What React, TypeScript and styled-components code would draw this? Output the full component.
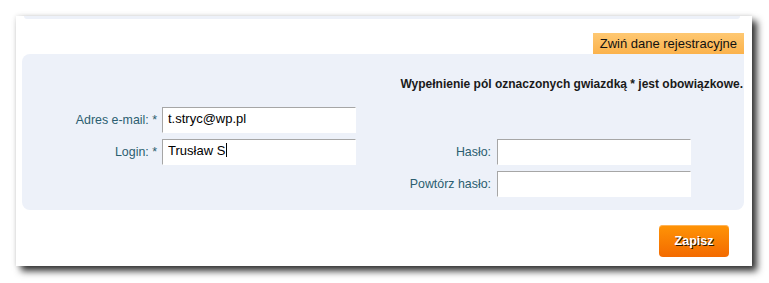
import React from "react";
import styled, { createGlobalStyle } from "styled-components";

const Global = createGlobalStyle`
  html, body { margin: 0; padding: 0; background: #ffffff; }
  body { font-family: "Liberation Sans", Arial, sans-serif; }
  * { box-sizing: border-box; }
`;

const Page = styled.div`
  padding: 16px 17px 17px 16px;
  min-height: 283px;
`;

const Card = styled.div`
  width: 736px;
  height: 250px;
  background: #ffffff;
  box-shadow: 5px 5px 7px rgba(0, 0, 0, 0.8), 0 0 5px rgba(0, 0, 0, 0.12);
  padding: 0 8px 0 6px;
  display: flex;
  flex-direction: column;
`;

const TopStrip = styled.div`
  height: 3px;
  margin: 0 4px 0 2px;
  background: #edf1f9;
  border-radius: 0 0 3px 3px;
`;

const TabRow = styled.div`
  display: flex;
  justify-content: flex-end;
  margin-top: 14px;
`;

const Tab = styled.button`
  height: 21px;
  padding: 0 7px;
  border: none;
  background: linear-gradient(#fec872, #fbb24c);
  font-family: "Liberation Sans", Arial, sans-serif;
  font-size: 13px;
  color: #111;
  cursor: pointer;
`;

const Panel = styled.div`
  height: 156px;
  background: #edf1f9;
  border-radius: 8px 0 8px 8px;
  padding: 23px 1px 13px 0;
`;

const Notice = styled.div`
  text-align: right;
  font-weight: bold;
  font-size: 12px;
  line-height: 14px;
  color: #1a1a1a;
  margin-bottom: 16px;
`;

const FormGrid = styled.div`
  display: grid;
  grid-template-columns: 140px 194px 141px 194px;
  grid-auto-rows: 26px;
  row-gap: 6px;
`;

const Label = styled.label<{ $col: number; $row: number }>`
  grid-column: ${(p) => p.$col};
  grid-row: ${(p) => p.$row};
  display: flex;
  align-items: center;
  justify-content: flex-end;
  padding-right: ${(p) => (p.$col === 1 ? 5 : 6)}px;
  font-size: 12.4px;
  color: #2b5e70;
  white-space: nowrap;
`;

const FieldWrap = styled.div<{ $col: number; $row: number }>`
  grid-column: ${(p) => p.$col};
  grid-row: ${(p) => p.$row};
  position: relative;
`;

const Input = styled.input`
  width: 100%;
  height: 26px;
  margin: 0;
  padding: 0 0 3px 5px;
  border-style: solid;
  border-width: 1px;
  border-color: #a6a6a6 #ffffff #ffffff #a6a6a6;
  background: #ffffff;
  font-family: "Liberation Sans", Arial, sans-serif;
  font-size: 13px;
  color: #000;
  outline: none;
`;

const Caret = styled.span`
  position: absolute;
  top: 4px;
  width: 1px;
  height: 14px;
  background: #000;
`;

const Footer = styled.div`
  display: flex;
  justify-content: flex-end;
  padding: 15px 15px 0 0;
`;

const SaveButton = styled.button`
  width: 70px;
  height: 32px;
  border: none;
  border-radius: 4px;
  background: linear-gradient(#ff9406, #f36a00);
  box-shadow: inset 0 1px 0 rgba(255, 200, 140, 0.6);
  color: #ffffff;
  font-family: "Liberation Sans", Arial, sans-serif;
  font-weight: bold;
  font-size: 12.5px;
  text-shadow: 1px 1px 0 #2a1500;
  cursor: pointer;
`;

export default function App() {
  return (
    <>
      <Global />
      <Page>
        <Card>
          <TopStrip />
          <TabRow>
            <Tab>Zwiń dane rejestracyjne</Tab>
          </TabRow>
          <Panel>
            <Notice>Wypełnienie pól oznaczonych gwiazdką * jest obowiązkowe.</Notice>
            <FormGrid>
              <Label $col={1} $row={1}>Adres e-mail: *</Label>
              <FieldWrap $col={2} $row={1}>
                <Input defaultValue="t.stryc@wp.pl" />
              </FieldWrap>
              <Label $col={1} $row={2}>Login: *</Label>
              <FieldWrap $col={2} $row={2}>
                <Input defaultValue="Trusław S" />
                <Caret style={{ left: 64 }} />
              </FieldWrap>
              <Label $col={3} $row={2}>Hasło:</Label>
              <FieldWrap $col={4} $row={2}>
                <Input type="password" />
              </FieldWrap>
              <Label $col={3} $row={3}>Powtórz hasło:</Label>
              <FieldWrap $col={4} $row={3}>
                <Input type="password" />
              </FieldWrap>
            </FormGrid>
          </Panel>
          <Footer>
            <SaveButton>Zapisz</SaveButton>
          </Footer>
        </Card>
      </Page>
    </>
  );
}
